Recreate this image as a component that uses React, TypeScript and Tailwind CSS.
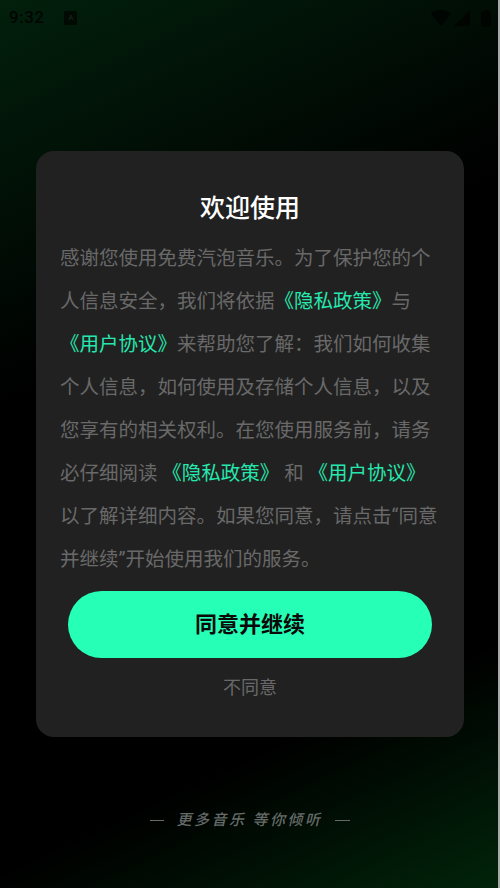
import React from 'react'

const fontStack = "font-['Roboto','Noto_Sans_CJK_SC',sans-serif]"

function Link({ children }: { children: React.ReactNode }) {
  return <span className="text-[#26e8ae]">{children}</span>
}

function StatusBar() {
  return (
    <div className="flex h-[36px] items-center justify-between pl-[9px] pr-[9px] text-[#010502]">
      <div className="flex items-center gap-[20px]">
        <span className="text-[17px] font-medium tracking-[0.5px]">9:32</span>
        <span className="flex h-[14px] w-[13px] items-center justify-center rounded-[1px] bg-[#020a04] text-[8px] text-[#1a2a1e]">A</span>
      </div>
      <div className="flex items-center gap-[3px]">
        <svg width="20" height="16" viewBox="0 0 20 16" fill="currentColor">
          <path d="M0 3.5C2.8 1.2 6.2 0 10 0s7.2 1.2 10 3.5L10 16 0 3.5z" />
        </svg>
        <svg width="16" height="16" viewBox="0 0 16 16" fill="currentColor">
          <path d="M16 0v16H0L16 0z" />
        </svg>
        <svg width="10" height="17" viewBox="0 0 10 17" fill="currentColor" className="ml-[8px]">
          <path d="M3 0h4v1.5h3V17H0V1.5h3V0z" />
        </svg>
      </div>
    </div>
  )
}

export default function App() {
  return (
    <div className={`${fontStack} relative flex h-[888px] w-[500px] flex-col overflow-hidden bg-[linear-gradient(155deg,#02200c_0%,#000000_36%,#000000_78%,#01240a_100%)]`}>
      <StatusBar />

      <div className="mx-[36px] mt-[115px] h-[586px] rounded-[18px] bg-[#212121] pt-[40px]">
        <h1 className="text-center text-[25px] font-medium leading-[36px] text-white">欢迎使用</h1>
        <p className="mt-[10px] px-[24px] text-[19.5px] leading-[43px] text-[#696969]">
          感谢您使用免费汽泡音乐。为了保护您的个人信息安全，我们将依据<Link>《隐私政策》</Link>与<Link>《用户协议》</Link>来帮助您了解：我们如何收集个人信息，如何使用及存储个人信息，以及您享有的相关权利。在您使用服务前，请务必仔细阅读 <Link>《隐私政策》</Link> 和 <Link>《用户协议》</Link> 以了解详细内容。如果您同意，请点击“同意并继续”开始使用我们的服务。
        </p>
        <div className="mx-[32px] mt-[10px] flex h-[67px] items-center justify-center rounded-full bg-[#26ffb6] text-[22px] font-bold text-[#0a0a0a]">
          同意并继续
        </div>
        <div className="mt-[16px] text-center text-[18px] leading-[27px] text-[#696969]">不同意</div>
      </div>

      <div className="mt-[73px] flex items-center justify-center gap-[12px] text-[15px] font-medium italic leading-[20px] text-[#666b69]">
        <span className="h-px w-[14px] bg-[#666b69]" />
        <span className="tracking-[2.5px]">更多音乐 等你倾听</span>
        <span className="h-px w-[15px] bg-[#666b69]" />
      </div>

      {/* light strip down the right edge of the capture */}
      <div className="absolute right-0 top-0 h-full w-[2px] bg-[#a8a8a8]" />
    </div>
  )
}
